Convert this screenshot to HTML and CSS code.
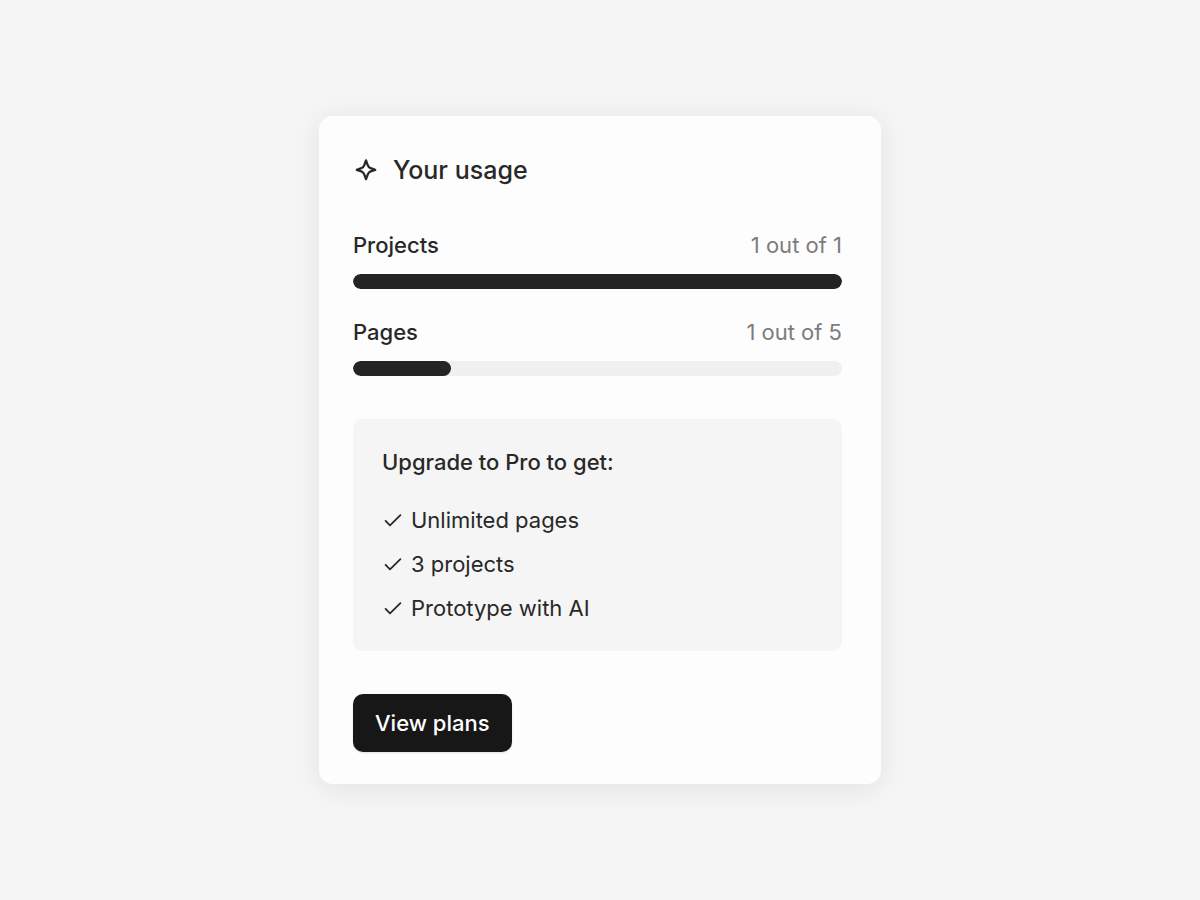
FILE: index.html
```html
<!DOCTYPE html>
<html lang="en">
<head>
    <meta charset="UTF-8">
    <meta name="viewport" content="width=device-width, initial-scale=1.0">
    <title>Your usage</title>
    <link rel="stylesheet" href="styles.css">
</head>
<body>
    <main class="card">
        <header class="card-header">
            <svg class="sparkle" viewBox="0 0 26 26" aria-hidden="true">
                <path d="M13 3.4 L14.8 8.3 Q15.6 10.4 17.7 11.2 L22.2 12.8 L17.7 14.4 Q15.6 15.2 14.8 17.3 L13 22.2 L11.2 17.3 Q10.4 15.2 8.3 14.4 L3.8 12.8 L8.3 11.2 Q10.4 10.4 11.2 8.3 Z"/>
            </svg>
            <h1>Your usage</h1>
        </header>

        <section class="usage">
            <div class="usage-item">
                <div class="usage-row">
                    <span class="usage-label" id="projects-label">Projects</span>
                    <span class="usage-count">1 out of 1</span>
                </div>
                <div class="bar" role="progressbar" aria-labelledby="projects-label" aria-valuenow="1" aria-valuemin="0" aria-valuemax="1">
                    <div class="bar-fill" style="width: 100%"></div>
                </div>
            </div>
            <div class="usage-item">
                <div class="usage-row">
                    <span class="usage-label" id="pages-label">Pages</span>
                    <span class="usage-count">1 out of 5</span>
                </div>
                <div class="bar" role="progressbar" aria-labelledby="pages-label" aria-valuenow="1" aria-valuemin="0" aria-valuemax="5">
                    <div class="bar-fill" style="width: 20%"></div>
                </div>
            </div>
        </section>

        <section class="upgrade">
            <h2>Upgrade to Pro to get:</h2>
            <ul class="features">
                <li>
                    <svg class="check" viewBox="0 0 22 22" aria-hidden="true"><path d="M3.6 10.8 L8 15.4 L18.4 5.2"/></svg>
                    Unlimited pages
                </li>
                <li>
                    <svg class="check" viewBox="0 0 22 22" aria-hidden="true"><path d="M3.6 10.8 L8 15.4 L18.4 5.2"/></svg>
                    3 projects
                </li>
                <li>
                    <svg class="check" viewBox="0 0 22 22" aria-hidden="true"><path d="M3.6 10.8 L8 15.4 L18.4 5.2"/></svg>
                    Prototype with AI
                </li>
            </ul>
        </section>

        <button class="button" type="button">View plans</button>
    </main>
</body>
</html>
```

FILE: styles.css
```css
:root {
    --background-color: #f5f5f5;
    --card-color: #fdfdfd;
    --text-color: #282828;
    --muted-color: #7c7c7c;
    --fill-color: #242424;
    --track-color: #f0f0f0;
}

* {
    margin: 0;
    padding: 0;
    box-sizing: border-box;
}

body {
    min-height: 100vh;
    display: flex;
    align-items: center;
    justify-content: center;
    background-color: var(--background-color);
    color: var(--text-color);
    font-family: Inter, "Liberation Sans", sans-serif;
    font-size: 22px;
    line-height: 29px;
}

.card {
    width: 100%;
    max-width: 562px;
    padding: 36px 39px 32px 34px;
    border-radius: 14px;
    background-color: var(--card-color);
    box-shadow: 0 4px 30px rgba(0, 0, 0, 0.08);
}

.card-header {
    display: flex;
    align-items: center;
    gap: 14px;
    margin-bottom: 43px;
}

.card-header h1 {
    font-size: 25px;
    font-weight: 500;
    line-height: 36px;
}

.sparkle {
    width: 26px;
    height: 26px;
    fill: none;
    stroke: currentColor;
    stroke-width: 2.3;
    stroke-linejoin: round;
}

.usage {
    display: grid;
    gap: 29px;
    margin-bottom: 43px;
}

.usage-row {
    display: flex;
    justify-content: space-between;
    margin-bottom: 14px;
}

.usage-label {
    font-weight: 500;
}

.usage-count {
    color: var(--muted-color);
}

.bar {
    height: 15px;
    border-radius: 8px;
    background-color: var(--track-color);
    overflow: hidden;
}

.bar-fill {
    height: 100%;
    border-radius: 8px;
    background-color: var(--fill-color);
}

.upgrade {
    padding: 29px 29px 28px;
    margin-bottom: 43px;
    border-radius: 10px;
    background-color: #f5f5f5;
}

.upgrade h2 {
    margin-bottom: 29px;
    font-size: 22px;
    font-weight: 500;
    line-height: 29px;
}

.features {
    display: grid;
    gap: 15px;
    list-style: none;
}

.features li {
    display: flex;
    align-items: center;
    gap: 7px;
}

.check {
    width: 22px;
    height: 22px;
    fill: none;
    stroke: currentColor;
    stroke-width: 1.8;
    stroke-linecap: round;
    stroke-linejoin: round;
}

.button {
    padding: 14px 22px;
    border: none;
    border-radius: 10px;
    background-color: #171717;
    color: white;
    font: inherit;
    font-weight: 500;
    line-height: 30px;
    cursor: pointer;
    box-shadow: 0 1px 2px rgba(0, 0, 0, 0.12);
}
```
